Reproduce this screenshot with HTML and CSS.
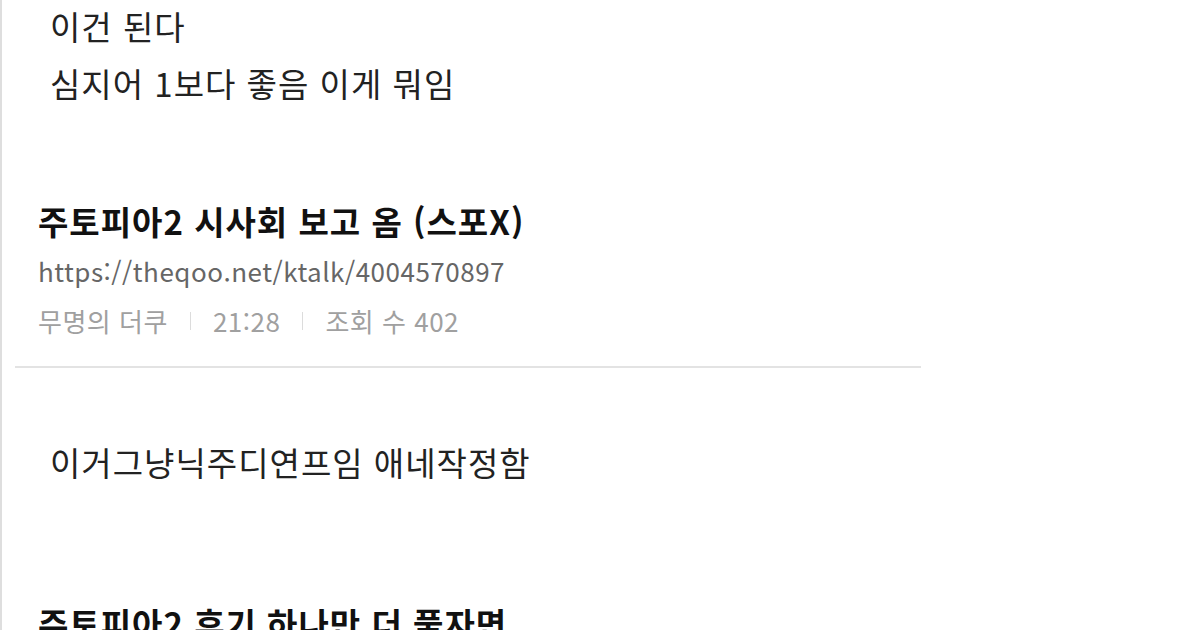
FILE: index.html
```
<!DOCTYPE html>
<html lang="ko">
<head>
    <meta charset="UTF-8">
    <meta name="viewport" content="width=device-width, initial-scale=1.0">
    <title>주토피아2 시사회 보고 옴</title>
    <link rel="stylesheet" href="styles.css">
</head>
<body>
    <div class="feed">
        <div class="comment">
            <p>이건 된다</p>
            <p>심지어 1보다 좋음 이게 뭐임</p>
        </div>

        <div class="post">
            <h3 class="post-title">주토피아2 시사회 보고 옴 (스포X)</h3>
            <p class="post-url">https://theqoo.net/ktalk/4004570897</p>
            <p class="post-meta">
                <span>무명의 더쿠</span><span class="bar"></span><span>21:28</span><span class="bar"></span><span>조회 수 402</span>
            </p>
        </div>

        <div class="comment comment-2">
            <p>이거그냥닉주디연프임 애네작정함</p>
        </div>

        <div class="post post-2">
            <h3 class="post-title">주토피아2 후기 하나만 더 풀자면</h3>
        </div>
    </div>
</body>
</html>
```
FILE: styles.css
```
* {
    padding: 0;
    margin: 0;
    box-sizing: border-box;
}
html, body {
    height: 100%;
    overflow: hidden;
}
body {
    background-color: #fff;
    border-left: 2px solid #dedede;
    font-family: "Noto Sans CJK KR", "Noto Sans", sans-serif;
    color: #222;
}
.feed {
    width: 919px;
    padding-top: 0;
}
.comment {
    padding-left: 48px;
}
.comment p {
    font-size: 33px;
    letter-spacing: 1px;
    line-height: 57px;
}
.comment:first-child {
    margin-top: -2px;
}
.comment-2 {
    padding-top: 66px;
}
.post {
    margin: 84px 0 0 13px;
    padding: 0 0 20px 23px;
    border-bottom: 2px solid #e3e3e3;
}
.post-title {
    font-size: 33px;
    letter-spacing: 1px;
    font-weight: bold;
    line-height: 50px;
    color: #111;
}
.post-url {
    font-size: 26px;
    letter-spacing: 0.5px;
    line-height: 50px;
    color: #666;
}
.post-meta {
    display: flex;
    align-items: center;
    font-size: 26px;
    letter-spacing: 0.5px;
    line-height: 50px;
    color: #a0a0a0;
}
.post-meta .bar {
    width: 1px;
    height: 18px;
    margin: 0 22px;
    background-color: #dcdcdc;
}
.post-2 {
    margin-top: 107px;
    border-bottom: none;
}
```
